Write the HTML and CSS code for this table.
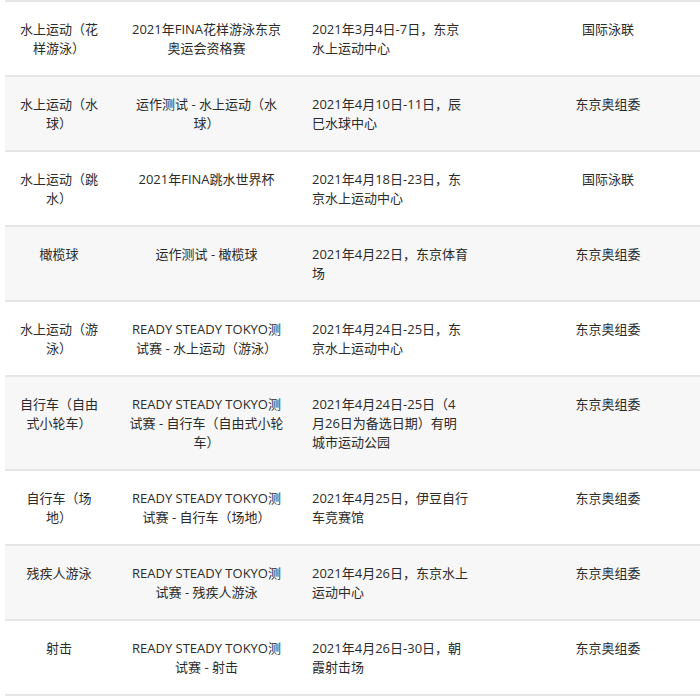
FILE: index.html
```html
<!DOCTYPE html>
<html lang="zh-CN">
<head>
<meta charset="utf-8">
<link rel="stylesheet" href="styles.css">
</head>
<body>
<div class="wrap">
<table class="events">
<colgroup>
<col class="c1"><col class="c2"><col class="c3"><col class="c4">
</colgroup>
<tbody>
<tr><td class="k1">水上运动（花<br>样游泳）</td><td class="k2">2021年FINA花样游泳东京<br>奥运会资格赛</td><td class="k3">2021年3月4日-7日，东京<br>水上运动中心</td><td class="k4">国际泳联</td></tr>
<tr><td class="k1">水上运动（水<br>球）</td><td class="k2">运作测试 - 水上运动（水<br>球）</td><td class="k3">2021年4月10日-11日，辰<br>巳水球中心</td><td class="k4">东京奥组委</td></tr>
<tr><td class="k1">水上运动（跳<br>水）</td><td class="k2">2021年FINA跳水世界杯</td><td class="k3">2021年4月18日-23日，东<br>京水上运动中心</td><td class="k4">国际泳联</td></tr>
<tr><td class="k1">橄榄球</td><td class="k2">运作测试 - 橄榄球</td><td class="k3">2021年4月22日，东京体育<br>场</td><td class="k4">东京奥组委</td></tr>
<tr><td class="k1">水上运动（游<br>泳）</td><td class="k2">READY STEADY TOKYO测<br>试赛 - 水上运动（游泳）</td><td class="k3">2021年4月24日-25日，东<br>京水上运动中心</td><td class="k4">东京奥组委</td></tr>
<tr><td class="k1">自行车（自由<br>式小轮车）</td><td class="k2">READY STEADY TOKYO测<br>试赛 - 自行车（自由式小轮<br>车）</td><td class="k3">2021年4月24日-25日（4<br>月26日为备选日期）有明<br>城市运动公园</td><td class="k4">东京奥组委</td></tr>
<tr><td class="k1">自行车（场<br>地）</td><td class="k2">READY STEADY TOKYO测<br>试赛 - 自行车（场地）</td><td class="k3">2021年4月25日，伊豆自行<br>车竞赛馆</td><td class="k4">东京奥组委</td></tr>
<tr><td class="k1">残疾人游泳</td><td class="k2">READY STEADY TOKYO测<br>试赛 - 残疾人游泳</td><td class="k3">2021年4月26日，东京水上<br>运动中心</td><td class="k4">东京奥组委</td></tr>
<tr><td class="k1">射击</td><td class="k2">READY STEADY TOKYO测<br>试赛 - 射击</td><td class="k3">2021年4月26日-30日，朝<br>霞射击场</td><td class="k4">东京奥组委</td></tr>
</tbody>
</table>
</div>
</body>
</html>
```

FILE: styles.css
```css
html, body {
  margin: 0;
  padding: 0;
  background: #ffffff;
}
.wrap {
  padding: 0 0 0 5px;
}
.events {
  table-layout: fixed;
  border-collapse: collapse;
  width: 695px;
  font-family: "Open Sans", "Noto Sans CJK SC", sans-serif;
  font-size: 13px;
  line-height: 19px;
  color: #2b2b2b;
}
.c1 { width: 108px; }
.c2 { width: 187px; }
.c3 { width: 183px; }
.c4 { width: 217px; }
.events td {
  border-top: 2px solid #e6e6e6;
  border-bottom: 2px solid #e6e6e6;
  padding-top: 18px;
  padding-bottom: 17px;
  vertical-align: top;
  white-space: nowrap;
}
.events td.k1 {
  text-align: center;
  padding-left: 4px;
  padding-right: 4px;
}
.events td.k2 {
  text-align: center;
  padding-left: 8px;
  padding-right: 8px;
}
.events td.k3 {
  text-align: left;
  padding-left: 12px;
  padding-right: 2px;
}
.events td.k4 {
  text-align: center;
  padding-left: 36px;
  padding-right: 3px;
}
.events tr:nth-child(even) td {
  background: #f7f7f7;
}
```
